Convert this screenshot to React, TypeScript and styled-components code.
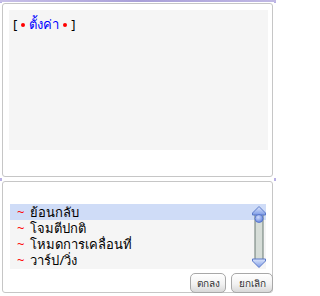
import styled, { createGlobalStyle } from "styled-components";

const GlobalStyle = createGlobalStyle`
  html, body {
    margin: 0;
    padding: 0;
    background: #fff;
  }
  body {
    font-family: Tahoma, "Noto Sans", "DejaVu Sans", sans-serif;
  }
`;

const commands = ["ย้อนกลับ", "โจมตีปกติ", "โหมดการเคลื่อนที่", "วาร์ป/วิ่ง"];

const Window = styled.div`
  width: 276px;
  height: 296px;
  display: flex;
  flex-direction: column;
  background: #fff;
  overflow: hidden;
`;

const TopStrip = styled.div`
  height: 2px;
  background: linear-gradient(90deg, #c8c0e8, #a9a0d8 50%, #c0b8e4);
`;

const Panel = styled.div<{ $height: number }>`
  margin: 0 3px 0 2px;
  height: ${(p) => p.$height}px;
  border: 1px solid #c6c6c6;
  border-radius: 3px;
  box-sizing: border-box;
  display: flex;
  flex-direction: column;
`;

// the little lavender notches where the two panels meet the frame
const Divider = styled.div<{ $height: number }>`
  height: ${(p) => p.$height}px;
  background:
    linear-gradient(#b8b0e4, #b8b0e4) left center / 2px 3px no-repeat,
    linear-gradient(#b8b0e4, #b8b0e4) right center / 2px 3px no-repeat;
`;

const InfoArea = styled.div`
  margin: 6px 4px 0 6px;
  height: 140px;
  background: #f5f5f5;
  padding: 4px 4px;
  box-sizing: border-box;
  font-size: 13px;
`;

const Bracket = styled.span`
  color: #000;
`;

const Dot = styled.span`
  display: inline-block;
  width: 4px;
  height: 4px;
  border-radius: 50%;
  background: #ff0000;
  vertical-align: middle;
  margin: 0 4px 2px;
`;

const Title = styled.span`
  color: #0000ff;
`;

const ListBox = styled.div`
  margin: 22px 6px 0 7px;
  height: 65px;
  background: #f5f5f5;
  position: relative;
`;

const Row = styled.div<{ $active?: boolean }>`
  height: 16px;
  line-height: 16px;
  font-size: 13px;
  color: #000;
  padding-left: 7px;
  background: ${(p) => (p.$active ? "#cfdcf7" : "transparent")};
  white-space: nowrap;
`;

const Tilde = styled.span`
  color: #ff0000;
  margin-right: 6px;
`;

const ScrollBar = styled.svg`
  position: absolute;
  right: 0;
  top: 2px;
`;

const ButtonRow = styled.div`
  margin: auto -1px -1px 0;
  display: flex;
  justify-content: flex-end;
  gap: 5px;
`;

const Button = styled.div<{ $width: number }>`
  width: ${(p) => p.$width}px;
  height: 20px;
  box-sizing: border-box;
  border: 1px solid #a8a8a8;
  border-radius: 5px;
  background: linear-gradient(#ffffff, #f2f2f2 55%, #d8d8d8);
  font-size: 10px;
  color: #333;
  display: flex;
  align-items: center;
  justify-content: center;
`;

const Scroller = () => (
  <ScrollBar width="14" height="62" viewBox="0 0 14 62">
    <defs>
      <linearGradient id="arrow" x1="0" y1="0" x2="0" y2="1">
        <stop offset="0" stopColor="#dce6fb" />
        <stop offset="1" stopColor="#7d9be6" />
      </linearGradient>
      <radialGradient id="knob" cx="0.4" cy="0.35" r="0.7">
        <stop offset="0" stopColor="#cfdcfb" />
        <stop offset="1" stopColor="#5f80dc" />
      </radialGradient>
    </defs>
    <rect x="3" y="8" width="8" height="46" fill="#d6ddd8" stroke="#6a7a74" strokeWidth="1" />
    <path d="M7 0.5 L13.5 7 L13.5 9 L0.5 9 L0.5 7 Z" fill="url(#arrow)" stroke="#5a78c8" />
    <circle cx="7" cy="12.5" r="4" fill="url(#knob)" stroke="#4f6fc8" strokeWidth="0.8" />
    <path d="M0.5 53 L13.5 53 L13.5 55 L7 61.5 L0.5 55 Z" fill="url(#arrow)" stroke="#5a78c8" />
  </ScrollBar>
);

const App = () => {
  return (
    <Window>
      <GlobalStyle />
      <TopStrip />
      <Divider $height={1} />
      <Panel $height={174}>
        <InfoArea>
          <Bracket>[</Bracket>
          <Dot />
          <Title>ตั้งค่า</Title>
          <Dot />
          <Bracket>]</Bracket>
        </InfoArea>
      </Panel>
      <Divider $height={4} />
      <Panel $height={112}>
        <ListBox>
          {commands.map((c, i) => (
            <Row key={c} $active={i === 0}>
              <Tilde>~</Tilde>
              {c}
            </Row>
          ))}
          <Scroller />
        </ListBox>
        <ButtonRow>
          <Button $width={36}>ตกลง</Button>
          <Button $width={42}>ยกเลิก</Button>
        </ButtonRow>
      </Panel>
    </Window>
  );
};

export default App;
